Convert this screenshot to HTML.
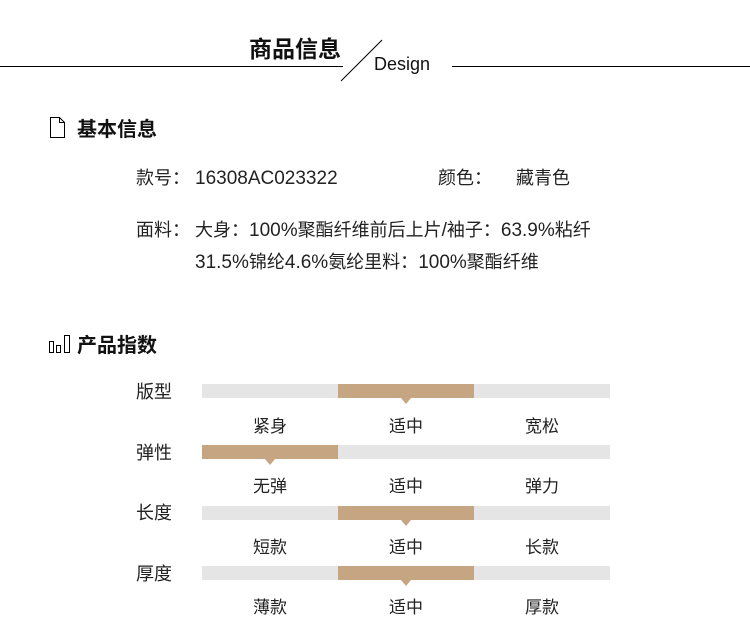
<!DOCTYPE html>
<html><head><meta charset="utf-8"><style>
body{margin:0;width:750px;height:620px;background:#fff;font-family:"Liberation Sans","Noto Sans CJK SC",sans-serif;color:#222;position:relative;overflow:hidden}
.a{position:absolute;white-space:nowrap}
.l{font-size:19px}
.t{font-size:18px;line-height:22px;color:#222}
.bar{position:absolute;left:202px;width:408px;height:14px;background:#e5e5e5}
.fill{position:absolute;top:0;width:136px;height:14px;background:#c5a582}
.fill:after{content:"";position:absolute;left:63px;top:14px;border-left:5px solid transparent;border-right:5px solid transparent;border-top:6px solid #c5a582}
.lb{font-size:18px;color:#222}
.op{font-size:17px;color:#222;width:136px;text-align:center}
</style></head><body>
<div class="a" style="left:0;top:66px;width:343px;height:1px;background:#000"></div>
<div class="a" style="left:452px;top:66px;width:298px;height:1px;background:#000"></div>
<svg class="a" style="left:0;top:0" width="750" height="100"><line x1="341" y1="81" x2="382" y2="40" stroke="#000" stroke-width="1"/></svg>
<div class="a" style="left:249px;top:30px;font-size:23px;font-weight:bold;color:#111">商品信息</div>
<div class="a" style="left:374px;top:54px;font-size:18px;color:#111">Design</div>

<svg class="a" style="left:50px;top:117px" width="16" height="22"><path d="M0.5 0.5H9.5L14.5 5.5V20.5H0.5Z M9.5 0.5V5.5H14.5" fill="none" stroke="#000"/></svg>
<div class="a" style="left:77px;top:113px;font-size:20px;font-weight:bold;color:#111">基本信息</div>

<div class="a t" style="left:136px;top:167px">款号：</div>
<div class="a t" style="left:195px;top:167px"><span class="l">16308AC023322</span></div>
<div class="a t" style="left:438px;top:167px">颜色：</div>
<div class="a t" style="left:516px;top:167px">藏青色</div>
<div class="a t" style="left:136px;top:219px">面料：</div>
<div class="a t" style="left:195px;top:219px">大身：<span class="l">100%</span>聚酯纤维前后上片<span class="l">/</span>袖子：<span class="l">63.9%</span>粘纤</div>
<div class="a t" style="left:195px;top:251px"><span class="l">31.5%</span>锦纶<span class="l">4.6%</span>氨纶里料：<span class="l">100%</span>聚酯纤维</div>

<svg class="a" style="left:49px;top:335px" width="22" height="18"><path d="M0.5 6.5h4v11h-4z M7.5 10.5h4v7h-4z M15.5 0.5h5v17h-5z" fill="none" stroke="#000"/></svg>
<div class="a" style="left:77px;top:329px;font-size:20px;font-weight:bold;color:#111">产品指数</div>

<div class="a lb" style="left:136px;top:378px">版型</div>
<div class="bar" style="top:384px"><div class="fill" style="left:136px"></div></div>
<div class="a op" style="left:202px;top:412px">紧身</div><div class="a op" style="left:338px;top:412px">适中</div><div class="a op" style="left:474px;top:412px">宽松</div>

<div class="a lb" style="left:136px;top:439px">弹性</div>
<div class="bar" style="top:445px"><div class="fill" style="left:0"></div></div>
<div class="a op" style="left:202px;top:472px">无弹</div><div class="a op" style="left:338px;top:472px">适中</div><div class="a op" style="left:474px;top:472px">弹力</div>

<div class="a lb" style="left:136px;top:499px">长度</div>
<div class="bar" style="top:506px"><div class="fill" style="left:136px"></div></div>
<div class="a op" style="left:202px;top:533px">短款</div><div class="a op" style="left:338px;top:533px">适中</div><div class="a op" style="left:474px;top:533px">长款</div>

<div class="a lb" style="left:136px;top:560px">厚度</div>
<div class="bar" style="top:566px"><div class="fill" style="left:136px"></div></div>
<div class="a op" style="left:202px;top:593px">薄款</div><div class="a op" style="left:338px;top:593px">适中</div><div class="a op" style="left:474px;top:593px">厚款</div>
</body></html>
